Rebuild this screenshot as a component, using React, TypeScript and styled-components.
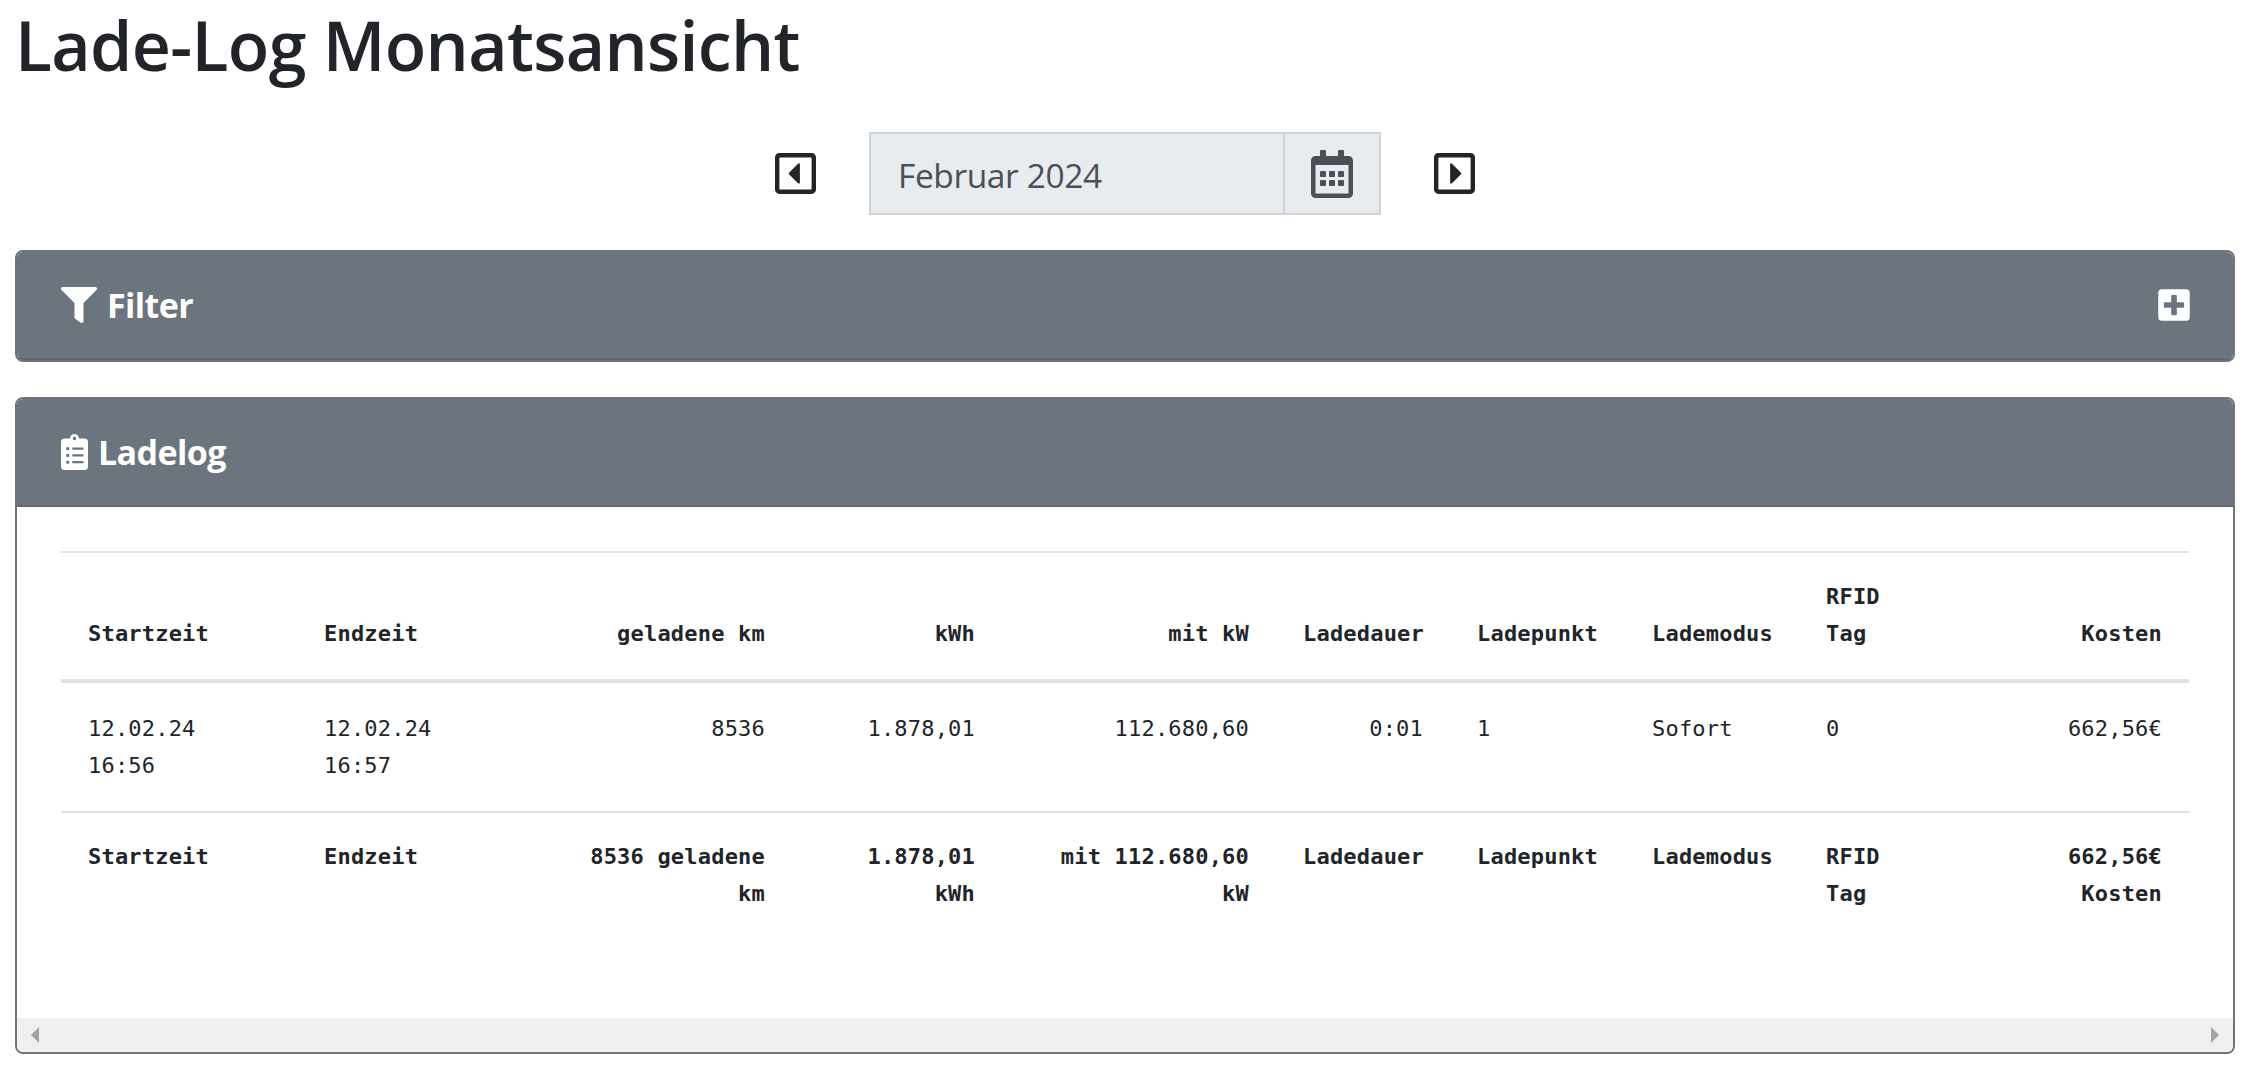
import React from 'react';
import styled, { createGlobalStyle } from 'styled-components';
import { FaFilter, FaClipboardList, FaPlusSquare, FaRegCalendarAlt, FaRegCaretSquareLeft, FaRegCaretSquareRight } from 'react-icons/fa';

const Global = createGlobalStyle`
  html, body { margin: 0; padding: 0; background: #fff; }
  body { font-family: "Open Sans", "Noto Sans", sans-serif; color: #212529; }
`;

const Page = styled.div`
  padding: 0 17px 0 15px;
  display: flex;
  flex-direction: column;
`;

const Title = styled.h1`
  margin: 0;
  height: 132px;
  padding-top: 3px;
  box-sizing: border-box;
  font-size: 68px;
  line-height: 84px;
  font-weight: 600;
  letter-spacing: -0.65px;
`;

const DateNav = styled.div`
  display: flex;
  justify-content: center;
  align-items: center;
  gap: 53px;
  height: 83px;
  margin-bottom: 35px;
`;

const NavIcon = styled.span`
  display: flex;
  color: #212529;
  font-size: 47px;
  width: 41px;
  justify-content: center;
`;

const DateGroup = styled.div`
  display: flex;
  width: 512px;
  height: 83px;
  box-sizing: border-box;
  border: 2px solid #ced4da;
  background: #e9ecef;
  color: #495057;
`;

const DateValue = styled.div`
  flex: 1;
  display: flex;
  align-items: center;
  padding: 2px 0 0 27px;
  font-size: 33.5px;
  letter-spacing: -0.4px;
`;

const DateAddon = styled.div`
  width: 94px;
  border-left: 2px solid #ced4da;
  display: flex;
  align-items: center;
  justify-content: center;
  font-size: 48px;
`;

const Card = styled.section<{ $gap?: number }>`
  margin-bottom: ${p => p.$gap ?? 0}px;
  border: 2px solid #6c757d;
  border-radius: 8px;
  overflow: hidden;
`;

const CardHeader = styled.header`
  height: 106px;
  background: #6c757d;
  color: #fff;
  display: flex;
  align-items: center;
  justify-content: space-between;
  padding: 0 41px 0 44px;
  border-bottom: 2px solid #5f666d;
`;

const CardTitle = styled.h2<{ $gap: number; $iconWidth: number }>`
  margin: 0;
  display: flex;
  align-items: center;
  gap: ${p => p.$gap}px;
  font-size: 34px;
  line-height: 40px;
  font-weight: 700;
  letter-spacing: -0.6px;
  svg { width: ${p => p.$iconWidth}px; height: 36px; flex: none; }
`;

const Toggle = styled.span`
  display: flex;
  font-size: 36px;
`;

const CardBody = styled.div`
  padding: 44px 44px 76px;
`;

const LogTable = styled.table`
  width: 100%;
  table-layout: fixed;
  border-collapse: collapse;
  font-family: "DejaVu Sans Mono", "Liberation Mono", monospace;
  font-size: 22px;
  line-height: 37px;
  letter-spacing: 0.2px;
  color: #212529;
`;

const Cell = styled.td<{ $right?: boolean }>`
  padding: 27px 27px 27px;
  vertical-align: top;
  text-align: ${p => (p.$right ? 'right' : 'left')};
`;

const HeadCell = styled(Cell).attrs({ as: 'th' })`
  padding: 25px 27px 27px;
  vertical-align: bottom;
  font-weight: 700;
`;

const FootCell = styled(Cell).attrs({ as: 'th' })`
  padding: 25px 27px 30px;
  font-weight: 700;
`;

const HeadRow = styled.tr`
  border-top: 2px solid #dee2e6;
  border-bottom: 4px solid #dee2e6;
`;

const BodyRow = styled.tr`
  border-bottom: 2px solid #dee2e6;
`;

const ScrollTrack = styled.div`
  height: 34px;
  background: #f0f0f0;
  display: flex;
  align-items: center;
  justify-content: space-between;
  padding: 0 14px;
`;

const ScrollArrow = styled.span<{ $dir: 'left' | 'right' }>`
  width: 0;
  height: 0;
  border-top: 8px solid transparent;
  border-bottom: 8px solid transparent;
  ${p => (p.$dir === 'left' ? 'border-right' : 'border-left')}: 8px solid #a3a3a3;
`;

const widths = [236, 230, 265, 210, 274, 174, 175, 174, 160, 230];

const cols: { head: string; cell: React.ReactNode; foot: string; right?: boolean; cellRight?: boolean }[] = [
  { head: 'Startzeit', cell: '12.02.24 16:56', foot: 'Startzeit' },
  { head: 'Endzeit', cell: '12.02.24 16:57', foot: 'Endzeit' },
  { head: 'geladene km', cell: '8536', foot: '8536 geladene km', right: true, cellRight: true },
  { head: 'kWh', cell: '1.878,01', foot: '1.878,01 kWh', right: true, cellRight: true },
  { head: 'mit kW', cell: '112.680,60', foot: 'mit 112.680,60 kW', right: true, cellRight: true },
  { head: 'Ladedauer', cell: '0:01', foot: 'Ladedauer', cellRight: true },
  { head: 'Ladepunkt', cell: '1', foot: 'Ladepunkt' },
  { head: 'Lademodus', cell: 'Sofort', foot: 'Lademodus' },
  { head: 'RFID Tag', cell: '0', foot: 'RFID Tag' },
  { head: 'Kosten', cell: '662,56€', foot: '662,56€ Kosten', right: true, cellRight: true },
];

export default function App() {
  return (
    <Page>
      <Global />
      <Title>Lade-Log Monatsansicht</Title>
      <DateNav>
        <NavIcon><FaRegCaretSquareLeft /></NavIcon>
        <DateGroup>
          <DateValue>Februar 2024</DateValue>
          <DateAddon><FaRegCalendarAlt /></DateAddon>
        </DateGroup>
        <NavIcon><FaRegCaretSquareRight /></NavIcon>
      </DateNav>
      <Card $gap={35}>
        <CardHeader>
          <CardTitle $gap={10} $iconWidth={36}><FaFilter />Filter</CardTitle>
          <Toggle><FaPlusSquare /></Toggle>
        </CardHeader>
      </Card>
      <Card>
        <CardHeader>
          <CardTitle $gap={10} $iconWidth={27}><FaClipboardList />Ladelog</CardTitle>
        </CardHeader>
        <CardBody>
          <LogTable>
            <colgroup>
              {widths.map((w, i) => <col key={i} style={{ width: w }} />)}
            </colgroup>
            <thead>
              <HeadRow>
                {cols.map(c => <HeadCell key={c.head} $right={c.right}>{c.head}</HeadCell>)}
              </HeadRow>
            </thead>
            <tbody>
              <BodyRow>
                {cols.map(c => <Cell key={c.head} $right={c.cellRight}>{c.cell}</Cell>)}
              </BodyRow>
            </tbody>
            <tfoot>
              <tr>
                {cols.map(c => <FootCell key={c.head} $right={c.right}>{c.foot}</FootCell>)}
              </tr>
            </tfoot>
          </LogTable>
        </CardBody>
        <ScrollTrack>
          <ScrollArrow $dir="left" />
          <ScrollArrow $dir="right" />
        </ScrollTrack>
      </Card>
    </Page>
  );
}
